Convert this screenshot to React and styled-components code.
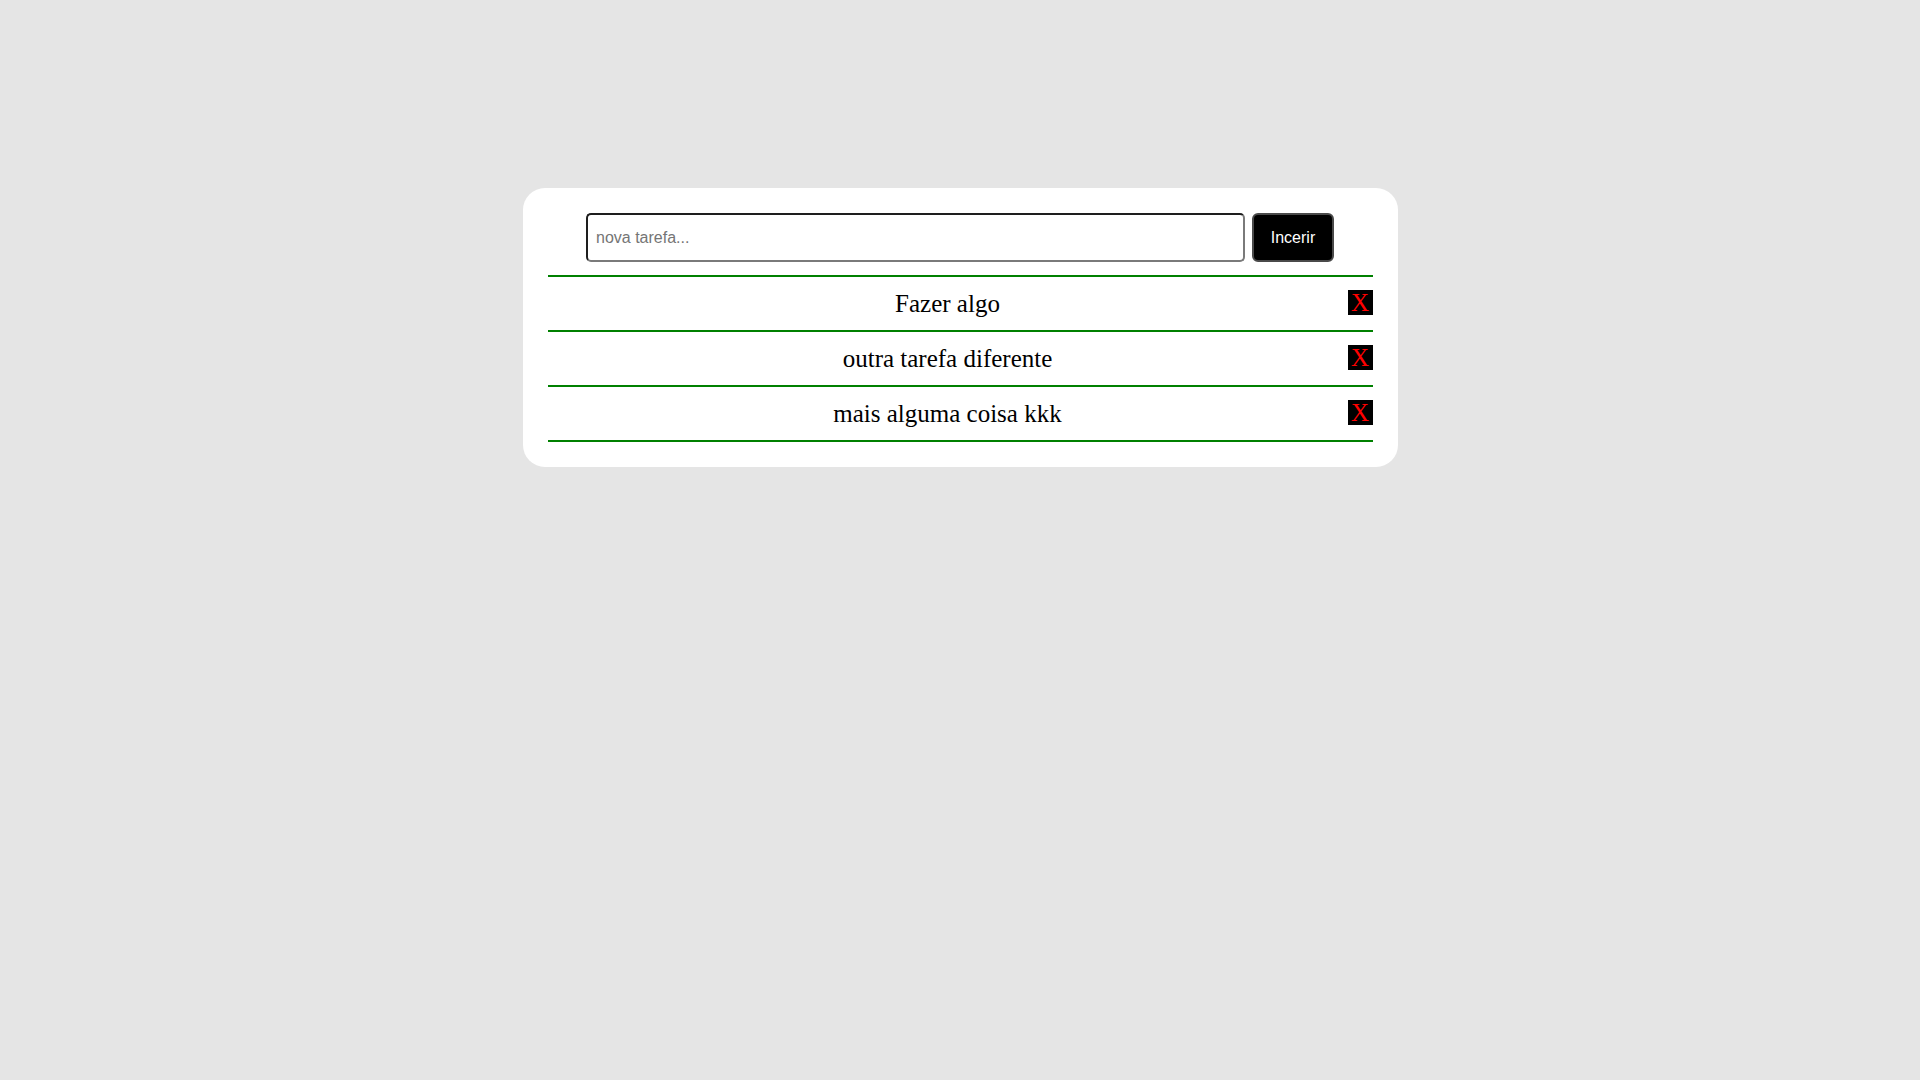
import React, { useState } from "react";
import styled, { createGlobalStyle } from "styled-components";

const GlobalStyle = createGlobalStyle`
  html, body {
    margin: 0;
    padding: 0;
    background: #e5e5e5;
  }
  body {
    font-family: "Liberation Serif", "Times New Roman", serif;
  }
  * { box-sizing: border-box; }
`;

const Page = styled.div`
  min-height: 100vh;
  padding-top: 188px;
  display: flex;
  justify-content: center;
  align-items: flex-start;
`;

const Card = styled.div`
  width: 875px;
  background: #ffffff;
  border-radius: 22px;
  padding: 25px;
`;

const Form = styled.form`
  display: flex;
  justify-content: center;
  gap: 7px;
  margin-bottom: 13px;
`;

const Input = styled.input`
  width: 659px;
  height: 49px;
  padding: 0 8px;
  border: 2px solid;
  border-color: #1e1e1e #7a7a7a #7a7a7a #1e1e1e;
  border-radius: 5px;
  font-family: "Liberation Sans", Arial, sans-serif;
  font-size: 16px;
  color: #000;
  outline: none;
  &::placeholder {
    color: #757575;
  }
`;

const AddButton = styled.button`
  width: 82px;
  height: 49px;
  background: #000;
  color: #fff;
  border: 2px solid #4a4a4a;
  border-radius: 6px;
  font-family: "Liberation Sans", Arial, sans-serif;
  font-size: 16px;
  padding: 0;
  cursor: pointer;
`;

const List = styled.ul`
  list-style: none;
  margin: 0;
  padding: 0;
  border-top: 2px solid #008000;
`;

const Row = styled.li`
  display: flex;
  align-items: center;
  height: 55px;
  border-bottom: 2px solid #008000;
`;

const TaskText = styled.span`
  flex: 1;
  text-align: center;
  font-family: "Liberation Serif", "Times New Roman", serif;
  font-size: 25px;
  color: #000;
`;

const RemoveButton = styled.button`
  width: 25px;
  height: 25px;
  padding: 0;
  margin: 0 0 2px 0;
  border: none;
  background: #000;
  color: #ff0000;
  font-family: "Liberation Serif", "Times New Roman", serif;
  font-size: 25px;
  line-height: 25px;
  display: flex;
  align-items: center;
  justify-content: center;
  cursor: pointer;
`;

export default function App() {
  const [tasks, setTasks] = useState([
    "Fazer algo",
    "outra tarefa diferente",
    "mais alguma coisa kkk",
  ]);
  const [value, setValue] = useState("");

  const add = (e) => {
    e.preventDefault();
    if (!value.trim()) return;
    setTasks([...tasks, value.trim()]);
    setValue("");
  };

  return (
    <>
      <GlobalStyle />
      <Page>
        <Card>
          <Form onSubmit={add}>
            <Input
              placeholder="nova tarefa..."
              value={value}
              onChange={(e) => setValue(e.target.value)}
            />
            <AddButton type="submit">Incerir</AddButton>
          </Form>
          <List>
            {tasks.map((t, i) => (
              <Row key={i}>
                <TaskText>{t}</TaskText>
                <RemoveButton
                  onClick={() => setTasks(tasks.filter((_, j) => j !== i))}
                >
                  X
                </RemoveButton>
              </Row>
            ))}
          </List>
        </Card>
      </Page>
    </>
  );
}
